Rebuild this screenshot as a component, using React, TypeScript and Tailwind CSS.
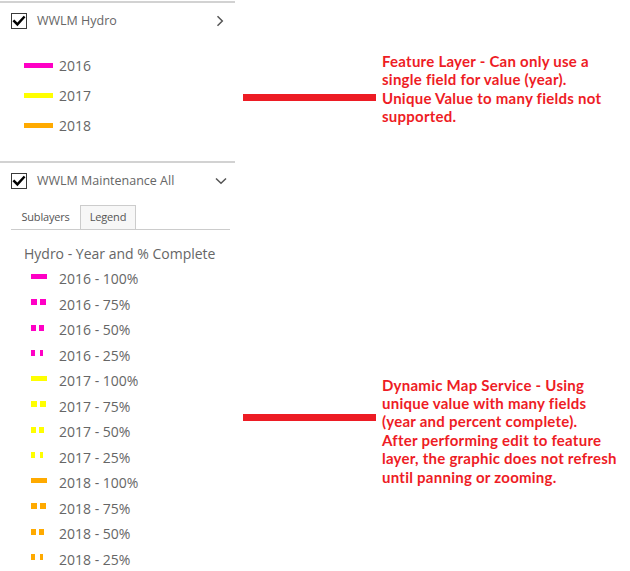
import React from "react";

const Check = () => (
  <div className="w-[16px] h-[16px] border border-[#3a3a3a] bg-white flex items-center justify-center shrink-0">
    <svg width="14" height="14" viewBox="0 0 14 14">
      <path d="M2.2 7.2 L5.4 10.4 L11.8 3.4" fill="none" stroke="#000" strokeWidth="2.4" strokeLinecap="square" />
    </svg>
  </div>
);

const featureRows = [
  { label: "2016", color: "#ff00c5" },
  { label: "2017", color: "#ffff00" },
  { label: "2018", color: "#ffaa00" },
];

const colors: Record<string, string> = {
  "2016": "#ff00c5",
  "2017": "#ffff00",
  "2018": "#ffaa00",
};

const Swatch = ({ pct, color }: { pct: string; color: string }) => {
  if (pct === "100") {
    return <div className="w-[16px] h-[5px]" style={{ backgroundColor: color }} />;
  }
  if (pct === "75") {
    return (
      <div className="flex gap-[3px]">
        <div className="w-[6px] h-[6px]" style={{ backgroundColor: color }} />
        <div className="w-[6px] h-[6px]" style={{ backgroundColor: color }} />
      </div>
    );
  }
  if (pct === "50") {
    return (
      <div className="flex gap-[3px]">
        <div className="w-[5px] h-[6px]" style={{ backgroundColor: color }} />
        <div className="w-[5px] h-[6px]" style={{ backgroundColor: color }} />
      </div>
    );
  }
  return (
    <div className="flex gap-[5px]">
      <div className="w-[3.5px] h-[6px]" style={{ backgroundColor: color }} />
      <div className="w-[3.5px] h-[6px]" style={{ backgroundColor: color }} />
    </div>
  );
};

const dynRows: { year: string; pct: string }[] = [];
["2016", "2017", "2018"].forEach((y) =>
  ["100", "75", "50", "25"].forEach((p) => dynRows.push({ year: y, pct: p }))
);

export default function App() {
  return (
    <div
      className="w-[630px] h-[571px] overflow-hidden bg-white flex"
      style={{ fontFamily: '"Open Sans", "Noto Sans", sans-serif' }}
    >
      {/* Left panel */}
      <div className="w-[235px] shrink-0 text-[#666666]">
        <div className="mt-[1px] h-[2px] bg-[#d2d2d2]" />
        <div className="flex items-center h-[36px] pl-[11px] pr-[11px]">
          <Check />
          <span className="ml-[10px] text-[12.5px]">WWLM Hydro</span>
          <div className="flex-1" />
          <svg width="8" height="12" viewBox="0 0 8 12">
            <path d="M1.5 1.2 L6.3 6 L1.5 10.8" fill="none" stroke="#555" strokeWidth="1.5" />
          </svg>
        </div>
        <div className="mt-[11px]">
          {featureRows.map((r) => (
            <div key={r.label} className="flex items-center h-[30px] pl-[24px]">
              <div className="w-[29px] h-[5px]" style={{ backgroundColor: r.color }} />
              <span className="ml-[6px] text-[14px]">{r.label}</span>
            </div>
          ))}
        </div>
        <div className="mt-[21px] h-[2px] bg-[#d2d2d2]" />
        <div className="flex items-center h-[36px] pl-[11px] pr-[8px]">
          <Check />
          <span className="ml-[10px] text-[12.5px]">WWLM Maintenance All</span>
          <div className="flex-1" />
          <svg width="12" height="8" viewBox="0 0 12 8">
            <path d="M1 1.5 L6 6.3 L11 1.5" fill="none" stroke="#555" strokeWidth="1.5" />
          </svg>
        </div>
        <div className="mt-[6px] ml-[11px] w-[219px] h-[25px] flex border-b border-[#cccccc] text-[11px] tracking-[-0.2px] text-[#555]">
          <div className="w-[69px] flex items-center justify-center">Sublayers</div>
          <div className="w-[56px] flex items-center justify-center border-t border-l border-r border-[#cccccc] bg-[#f7f7f7]">
            Legend
          </div>
        </div>
        <div className="mt-[10px] h-[26px] flex items-center pl-[24px] text-[14px]">
          Hydro - Year and % Complete
        </div>
        {dynRows.map((r) => (
          <div key={r.year + r.pct} className="flex items-center h-[25.5px]">
            <div className="w-[59px] pl-[31px] flex items-center mb-[4px]">
              <Swatch pct={r.pct} color={colors[r.year]} />
            </div>
            <span className="text-[14px]">
              {r.year} - {r.pct}%
            </span>
          </div>
        ))}
      </div>

      {/* Right annotations */}
      <div
        className="flex-1 text-[#ee1c25] font-bold text-[15px] tracking-[0.25px] leading-[18.4px] whitespace-nowrap"
        style={{ fontFamily: 'Lato, "Liberation Sans", sans-serif' }}
      >
        <div className="flex items-start mt-[52px]">
          <div className="ml-[8px] mt-[42px] w-[133px] h-[7px] bg-[#ed1c24] shrink-0" />
          <div className="ml-[6px]">
            Feature Layer - Can only use a
            <br />
            single field for value (year).
            <br />
            Unique Value to many fields not
            <br />
            supported.
          </div>
        </div>
        <div className="flex items-start mt-[250px]">
          <div className="ml-[8px] mt-[38px] w-[133px] h-[7px] bg-[#ed1c24] shrink-0" />
          <div className="ml-[6px]">
            Dynamic Map Service - Using
            <br />
            unique value with many fields
            <br />
            (year and percent complete).
            <br />
            After performing edit to feature
            <br />
            layer, the graphic does not refresh
            <br />
            until panning or zooming.
          </div>
        </div>
      </div>
    </div>
  );
}
